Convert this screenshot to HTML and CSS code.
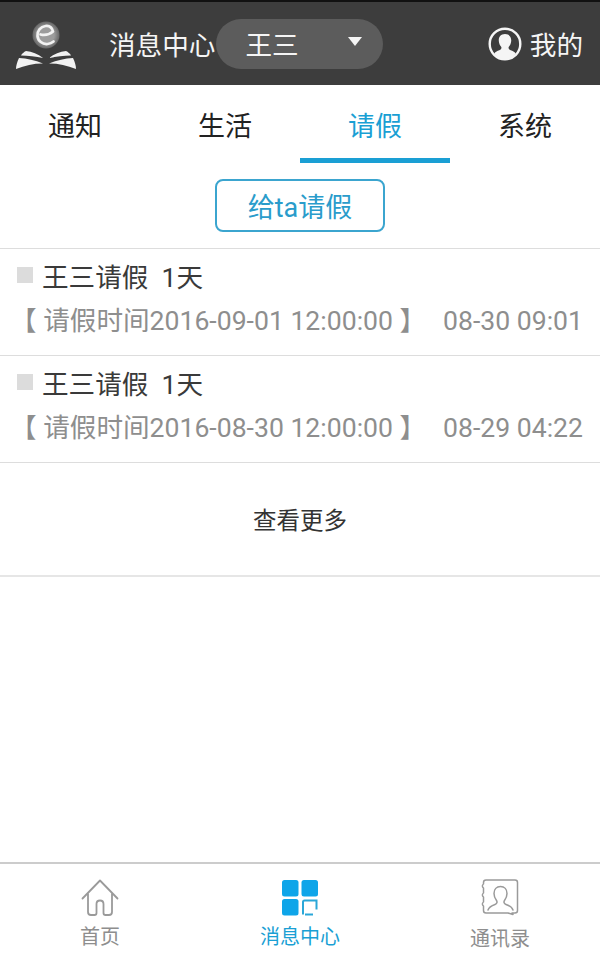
FILE: index.html
```html
<!DOCTYPE html>
<html lang="zh">
<head>
<meta charset="utf-8">
<title>消息中心</title>
<link rel="stylesheet" href="styles.css">
</head>
<body>
<div class="app">
  <header class="top">
    <svg class="logo" width="62" height="52" viewBox="0 0 62 52">
      <defs>
        <radialGradient id="ball" cx="50%" cy="50%" r="50%">
          <stop offset="0.6" stop-color="#9c9c9c"/>
          <stop offset="1" stop-color="#666"/>
        </radialGradient>
      </defs>
      <circle cx="31" cy="16" r="13.500" fill="url(#ball)"/>
      <path d="M25.500 15.500c4 1 9 0 12.500-3-1-4-4-6-7.500-5.500-5 .7-8.500 5-8 10 .5 5 5 8.500 10 8 2.500-.3 4.500-1.200 6-2.500" fill="none" stroke="#f2f2f2" stroke-width="2.700" stroke-linecap="round" stroke-linejoin="round"/>
      <path d="M6 36.500c1-2 3-3.500 5-4.500 6 .5 12 3 17 7-7-1.500-15-2.500-22-2.500z" fill="#f2f2f2"/>
      <path d="M56 36.500c-1-2-3-3.500-5-4.500-6 .5-12 3-17 7 7-1.500 15-2.500 22-2.500z" fill="#f2f2f2"/>
      <path d="M1 50c0-3 1-7 3-11 8 .5 16 2 24 5.500-10 0-18 2-27 5.500z" fill="#f2f2f2"/>
      <path d="M61 50c0-3-1-7-3-11-8 .5-16 2-24 5.500 10 0 18 2 27 5.500z" fill="#f2f2f2"/>
    </svg>
    <span class="top-title">消息中心</span>
    <div class="picker"><span>王三</span><i class="caret"></i></div>
    <div class="me">
      <svg width="34" height="34" viewBox="0 0 34 34">
        <circle cx="17" cy="17" r="15.300" fill="none" stroke="#f5f5f5" stroke-width="2.400"/>
        <path d="M17 7c-4.300 0-6.500 3.200-6.200 7 .2 2.500 1.200 4.500 2.500 6 .5 1.500-.3 2.600-2 3.300-2 .8-3.700 1.500-5 3.200C9 30.500 13 32 17 32s8-1.500 10.700-5.500c-1.300-1.700-3-2.400-5-3.200-1.700-.7-2.500-1.800-2-3.300 1.300-1.500 2.300-3.500 2.500-6 .3-3.800-1.900-7-6.200-7z" fill="#f5f5f5"/>
      </svg>
      <span>我的</span>
    </div>
  </header>

  <nav class="tabs">
    <a class="tab">通知</a>
    <a class="tab">生活</a>
    <a class="tab active">请假</a>
    <a class="tab">系统</a>
  </nav>

  <div class="action"><button class="leave-btn">给ta请假</button></div>

  <ul class="list">
    <li class="item">
      <div class="item-title"><i class="mark"></i><span>王三请假&nbsp;&nbsp;1天</span></div>
      <div class="item-meta"><span class="range">【 请假时间2016-09-01 12:00:00 】</span><span class="date">08-30 09:01</span></div>
    </li>
    <li class="item">
      <div class="item-title"><i class="mark"></i><span>王三请假&nbsp;&nbsp;1天</span></div>
      <div class="item-meta"><span class="range">【 请假时间2016-08-30 12:00:00 】</span><span class="date">08-29 04:22</span></div>
    </li>
  </ul>
  <div class="more">查看更多</div>

  <footer class="bottom">
    <div class="nav-item">
      <svg class="nav-icon" width="38" height="38" viewBox="0 0 38 38">
        <path d="M1.500 19.500 19 1.500l17.500 18M7 15v18c0 2 1 3 3 3h3.500c1.500 0 2-1 2-2V25c0-2 1.500-3.500 3.500-3.500s3.500 1.500 3.500 3.500v9c0 1 .5 2 2 2H28c2 0 3-1 3-3V15" fill="none" stroke="#9a9a9a" stroke-width="1.800" stroke-linecap="round" stroke-linejoin="round"/>
      </svg>
      <span>首页</span>
    </div>
    <div class="nav-item current">
      <svg class="nav-icon" width="38" height="38" viewBox="0 0 38 38">
        <rect x="1" y="1" width="16.500" height="16.500" rx="2.500" fill="#0ea5e9"/>
        <rect x="20.500" y="1" width="16.500" height="16.500" rx="2.500" fill="#0ea5e9"/>
        <rect x="1" y="20" width="16.500" height="16.500" rx="2.500" fill="#0ea5e9"/>
        <path d="M22 35.500V23c0-.8.500-1.500 1.500-1.500h12v9" fill="none" stroke="#2aa7d8" stroke-width="2"/>
        <path d="M24 35.500h8" fill="none" stroke="#2aa7d8" stroke-width="2"/>
      </svg>
      <span>消息中心</span>
    </div>
    <div class="nav-item">
      <svg class="nav-icon" width="38" height="38" viewBox="0 0 38 38">
        <path d="M5 1h29c1.500 0 2.500 1 2.500 2.500v28c0 1.500-1 2.500-2.500 2.500h-3l1 1.500L27 34H5c-1.500 0-2.500-1-2.500-2.500V27c-1.500-1-1.500-3 0-4v-5c-1.500-1-1.500-3 0-4V9C1 8 1 6 2.500 5V3.500C2.500 2 3.500 1 5 1z" fill="none" stroke="#9a9a9a" stroke-width="1.500" stroke-linejoin="round"/>
        <path d="M7 31c1-3 4-4.500 7-5.500 2-.7 2.500-2.500 1.500-4-1.500-2-2.500-4-2.500-7 0-4 2.500-7 6.500-7s6.500 3 6.500 7c0 3-1 5-2.500 7-1 1.500-.5 3.300 1.500 4 3 1 6 2.500 7 5.500" fill="none" stroke="#9a9a9a" stroke-width="1.500" stroke-linecap="round"/>
      </svg>
      <span class="contacts">通讯录</span>
    </div>
  </footer>
</div>
</body>
</html>
```

FILE: styles.css
```css
* { box-sizing: border-box; }
html, body { margin: 0; padding: 0; }
body {
  font-family: Roboto, "Noto Sans CJK SC", sans-serif;
  background: #fff;
  color: #333;
}
.app {
  width: 600px;
  height: 964px;
  display: flex;
  flex-direction: column;
  overflow: hidden;
}
.top {
  height: 85px;
  flex: none;
  display: flex;
  align-items: center;
  background: #3d3d3d;
  border-top: 2px solid #111;
  color: #f5f5f5;
  padding: 0 17px 0 15px;
  font-size: 26.600px;
}
.logo { flex: none; margin-top: 2px; }
.top-title { margin-left: 32px; white-space: nowrap; }
.picker {
  width: 167px;
  height: 50px;
  margin-left: 1px;
  border-radius: 25px;
  background: #5c5c5c;
  display: flex;
  align-items: center;
  padding: 0 21px 0 29px;
  justify-content: space-between;
}
.caret {
  width: 0;
  height: 0;
  margin-top: -4px;
  border-left: 7px solid transparent;
  border-right: 7px solid transparent;
  border-top: 9px solid #f5f5f5;
}
.me {
  margin-left: auto;
  display: flex;
  align-items: center;
  gap: 8px;
}
.me svg { display: block; }
.tabs {
  height: 78px;
  flex: none;
  display: flex;
}
.tab {
  flex: 1;
  display: flex;
  align-items: center;
  justify-content: center;
  font-size: 27px;
  color: #222;
}
.tab.active {
  color: #1a9fd4;
  border-bottom: 5px solid #1a9fd4;
  padding-top: 5px;
}
.action {
  height: 86px;
  flex: none;
  display: flex;
  justify-content: center;
  padding-top: 16px;
  border-bottom: 1px solid #ddd;
}
.leave-btn {
  width: 170px;
  height: 53px;
  background: #fff;
  border: 2px solid #3ba5cf;
  border-radius: 8px;
  color: #2a9ccb;
  font: inherit;
  font-size: 27px;
  padding: 0;
}
.list { list-style: none; margin: 0; padding: 0; }
.item {
  height: 107px;
  padding: 6px 17px 0 17px;
  border-bottom: 1px solid #ddd;
}
.item-title {
  display: flex;
  align-items: center;
  gap: 9px;
  height: 40px;
  font-size: 26.600px;
  color: #3a3a3a;
}
.mark { width: 16px; height: 16px; background: #dcdcdc; margin-top: -1px; }
.item-meta {
  display: flex;
  justify-content: space-between;
  align-items: baseline;
  height: 44px;
  margin-top: 4px;
  font-size: 26.600px;
  color: #8e8e8e;
  white-space: nowrap;
}
.range { margin-left: -7px; }
.more {
  height: 114px;
  flex: none;
  display: flex;
  align-items: center;
  justify-content: center;
  font-size: 23.500px;
  color: #333;
  border-bottom: 2px solid #e6e6e6;
}
.bottom {
  margin-top: auto;
  height: 102px;
  flex: none;
  display: flex;
  border-top: 2px solid #ccc;
}
.nav-item {
  flex: 1;
  display: flex;
  flex-direction: column;
  align-items: center;
  padding-top: 15px;
  font-size: 20px;
  color: #8e8e8e;
}
.nav-icon { display: block; margin-bottom: 4px; }
.nav-item.current { color: #1a9fd4; }
.contacts { margin-top: 2px; }
```
